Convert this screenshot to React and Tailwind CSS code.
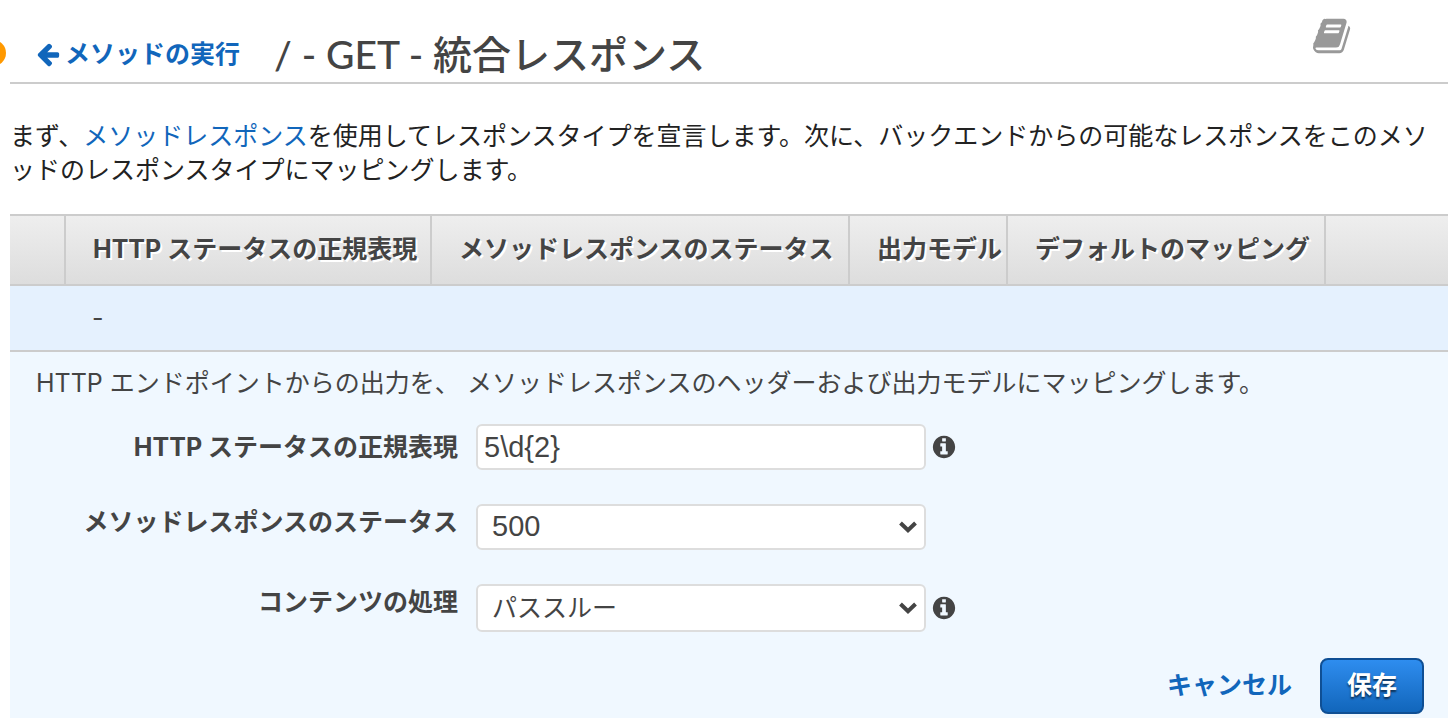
import React from "react";

const ICONS = {
  arrowLeft:
    "M1664 896v128q0 53-32.5 90.5t-84.5 37.5h-704l293 294q38 36 38 90t-38 90l-75 76q-37 37-90 37-52 0-91-37l-651-652q-37-37-37-90 0-52 37-91l651-650q38-38 91-38 52 0 90 38l75 74q38 38 38 91t-38 91l-293 293h704q52 0 84.5 37.5t32.5 90.5z",
  info:
    "M1152 1376v-160q0-14-9-23t-23-9h-96v-512q0-14-9-23t-23-9h-320q-14 0-23 9t-9 23v160q0 14 9 23t23 9h96v320h-96q-14 0-23 9t-9 23v160q0 14 9 23t23 9h448q14 0 23-9t9-23zm-128-896v-160q0-14-9-23t-23-9h-192q-14 0-23 9t-9 23v160q0 14 9 23t23 9h192q14 0 23-9t9-23zm640 416q0 209-103 385.5t-279.5 279.5-385.5 103-385.5-103-279.5-279.5-103-385.5 103-385.5 279.5-279.5 385.5-103 385.5 103 279.5 279.5 103 385.5z",
  book:
    "M1639 478q40 57 18 129l-275 906q-19 64-76.5 107.5t-122.5 43.5h-923q-77 0-148.5-53.5t-99.5-131.5q-24-67-2-127 0-4 3-27t4-37q1-8-3-21.5t-3-19.5q2-11 8-21t16.5-23.5 16.5-23.5q23-38 45-91.5t30-91.5q3-10 .5-30t-.5-28q3-11 17-28t17-23q21-36 42-92t25-90q1-9-2.5-32t.5-28q4-13 22-30.5t22-22.5q19-26 42.5-84.5t27.5-96.5q1-8-3-25.5t-2-26.5q2-8 9-18t18-23 17-21q8-12 16.5-30.5t15-35 16-36 19.5-32 26.5-23.5 36-11.5 47.5 5.5l-1 3q38-9 51-9h761q74 0 114 56t18 130l-274 906q-36 119-71.5 153.5t-128.5 34.5h-869q-27 0-38 15-11 16-1 43 24 70 144 70h923q29 0 56-15.5t35-41.5l300-987q7-22 5-57 38 15 59 43zm-1064 2q-4 13 2 22.5t20 9.5h608q13 0 25.5-9.5t16.5-22.5l21-64q4-13-2-22.5t-20-9.5h-608q-13 0-25.5 9.5t-16.5 22.5zm-83 256q-4 13 2 22.5t20 9.5h608q13 0 25.5-9.5t16.5-22.5l21-64q4-13-2-22.5t-20-9.5h-608q-13 0-25.5 9.5t-16.5 22.5z",
};

function Icon({ name, className }) {
  return (
    <svg viewBox="0 0 1792 1792" fill="currentColor" aria-hidden="true" className={className}>
      <path d={ICONS[name]} />
    </svg>
  );
}

const CONTROL =
  "w-full rounded-md border-2 border-[#dddddd] bg-white text-[#444444] outline-none";

function SelectBox({ id, options, className }) {
  return (
    <div className="relative w-[450px] shrink-0">
      <select id={id} className={`${CONTROL} block appearance-none pr-10 pl-[14px] ${className}`}>
        {options.map((o) => (
          <option key={o}>{o}</option>
        ))}
      </select>
      <svg
        viewBox="0 0 18 12"
        aria-hidden="true"
        className="pointer-events-none absolute top-1/2 right-[9px] h-3 w-[18px] -translate-y-1/2"
      >
        <path d="M1.5 2 9 9.2 16.5 2" fill="none" stroke="#444444" strokeWidth="4" />
      </svg>
    </div>
  );
}

function InfoButton() {
  return (
    <button type="button" aria-label="情報" className="ml-[5px] text-[#444444]">
      <Icon name="info" className="size-[26px]" />
    </button>
  );
}

const LABEL = "w-[448px] shrink-0 text-right font-bold";

const COLUMNS = [
  ["", "w-[54px]"],
  ["HTTP ステータスの正規表現", "w-[366px]"],
  ["メソッドレスポンスのステータス", "w-[418px]"],
  ["出力モデル", "w-[158px]"],
  ["デフォルトのマッピング", "w-[318px]"],
  ["", ""],
];

export default function App() {
  return (
    <div
      lang="ja"
      className="min-h-screen overflow-hidden bg-white pl-[10px] font-['Inter','Noto_Sans_CJK_JP',sans-serif] text-[25px] leading-[34px] text-[#444444]"
    >
      <header className="relative flex h-[84px] items-center border-b-2 border-[#cccccc] pt-[26px] pl-[25px]">
        <a href="#method" className="flex items-center gap-1 leading-9 font-bold text-[#1166bb]">
          <Icon name="arrowLeft" className="size-[26px]" />
          メソッドの実行
        </a>
        <h1 className="ml-[34px] font-['Lato','Noto_Sans_CJK_JP',sans-serif] text-[39px] leading-[56px] font-medium">
          / - GET - 統合レスポンス
        </h1>
        <button type="button" aria-label="ドキュメント" className="absolute top-4 right-[95px] text-[#999999]">
          <Icon name="book" className="size-10" />
        </button>
      </header>
      <span className="absolute top-10 -left-5 size-[26px] rounded-full bg-[#ff9900]" />

      <p className="mt-[35px] mb-[27px] text-[#222222]">
        まず、<a href="#responses" className="text-[#1166bb]">メソッドレスポンス</a>
        を使用してレスポンスタイプを宣言します。次に、バックエンドからの可能なレスポンスをこのメソッドのレスポンスタイプにマッピングします。
      </p>

      <table className="w-full table-fixed border-separate border-spacing-0 text-left">
        <thead>
          <tr>
            {COLUMNS.map(([title, width], i) => (
              <th
                key={i}
                className={`${width} ${i > 0 ? "border-l-2 pl-[27px]" : ""} h-[72px] border-y-2 border-[#cccccc] bg-linear-to-b from-[#eeeeee] to-[#dddddd] pb-[2px] font-bold whitespace-nowrap [text-shadow:2px_2px_0_#ffffff]`}
              >
                {title}
              </th>
            ))}
          </tr>
        </thead>
        <tbody>
          <tr className="bg-[#e5f1fe]">
            <td className="h-[66px] border-b-2 border-[#cccccc]" />
            <td className="border-b-2 border-[#cccccc] pl-[28px]">-</td>
            <td className="border-b-2 border-[#cccccc]" />
            <td className="border-b-2 border-[#cccccc]" />
            <td className="border-b-2 border-[#cccccc]" />
            <td className="border-b-2 border-[#cccccc]" />
          </tr>
        </tbody>
      </table>

      <form className="bg-[#f0f8ff] pt-[13px] pb-1 leading-9">
        <p className="pl-[26px]">
          HTTP エンドポイントからの出力を、 メソッドレスポンスのヘッダーおよび出力モデルにマッピングします。
        </p>

        <div className="mt-[23px] flex flex-col gap-[34px]">
          <div className="flex items-center">
            <label htmlFor="pattern" className={LABEL}>HTTP ステータスの正規表現</label>
            <div className="ml-[18px] w-[450px] shrink-0">
              <input
                id="pattern"
                type="text"
                defaultValue="5\d{2}"
                className={`${CONTROL} block h-[46px] px-[6px] font-['Liberation_Sans',sans-serif] text-[29px]`}
              />
            </div>
            <InfoButton />
          </div>
          <div className="flex items-start">
            <label htmlFor="status" className={`${LABEL} mr-[18px]`}>メソッドレスポンスのステータス</label>
            <SelectBox id="status" options={["500"]} className="h-[46px] pb-[2px] font-['Liberation_Sans',sans-serif] text-[29px]" />
          </div>
          <div className="flex items-start">
            <label htmlFor="handling" className={`${LABEL} mr-[18px]`}>コンテンツの処理</label>
            <SelectBox id="handling" options={["パススルー"]} className="h-12" />
            <div className="flex h-12 items-center">
              <InfoButton />
            </div>
          </div>
        </div>

        <div className="mt-[26px] flex items-center justify-end gap-7 pr-6">
          <a href="#cancel" className="pb-[2px] font-bold text-[#1166bb]">キャンセル</a>
          <button
            type="submit"
            className="h-14 w-[104px] rounded-lg border-2 border-[#0f4f94] bg-linear-to-b from-[#2e8def] to-[#1166bb] pb-[2px] font-bold text-white [text-shadow:0_2px_2px_rgba(0,0,0,0.6)]"
          >
            保存
          </button>
        </div>
      </form>
    </div>
  );
}
